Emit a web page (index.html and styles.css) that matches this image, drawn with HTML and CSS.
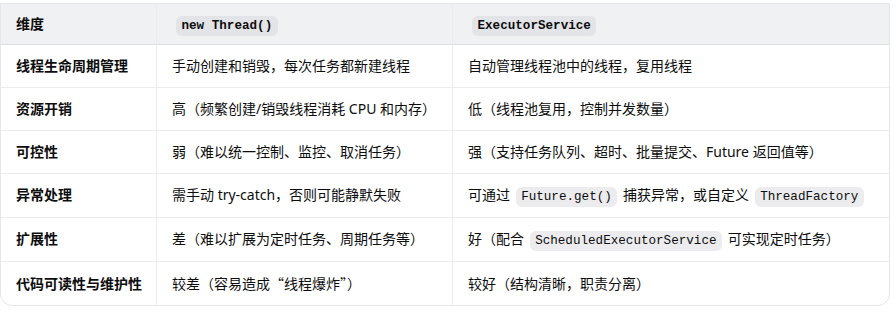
FILE: index.html
```html
<!DOCTYPE html>
<html lang="zh">
<head>
<meta charset="utf-8">
<link rel="stylesheet" href="styles.css">
</head>
<body>
<div class="wrap">
<table class="cmp">
<thead>
<tr><th class="c1">维度</th><th class="c2"><code>new Thread()</code></th><th class="c3"><code>ExecutorService</code></th></tr>
</thead>
<tbody>
<tr><td class="c1">线程生命周期管理</td><td>手动创建和销毁，每次任务都新建线程</td><td>自动管理线程池中的线程，复用线程</td></tr>
<tr><td class="c1">资源开销</td><td>高（频繁创建/销毁线程消耗 CPU 和内存）</td><td>低（线程池复用，控制并发数量）</td></tr>
<tr><td class="c1">可控性</td><td>弱（难以统一控制、监控、取消任务）</td><td>强（支持任务队列、超时、批量提交、Future 返回值等）</td></tr>
<tr class="tall"><td class="c1">异常处理</td><td>需手动 try-catch，否则可能静默失败</td><td>可通过 <code>Future.get()</code> 捕获异常，或自定义 <code>ThreadFactory</code></td></tr>
<tr class="tall"><td class="c1">扩展性</td><td>差（难以扩展为定时任务、周期任务等）</td><td>好（配合 <code>ScheduledExecutorService</code> 可实现定时任务）</td></tr>
<tr><td class="c1">代码可读性与维护性</td><td>较差（容易造成<span class="cjk">“</span>线程爆炸<span class="cjk">”</span>）</td><td>较好（结构清晰，职责分离）</td></tr>
</tbody>
</table>
</div>
</body>
</html>
```
FILE: styles.css
```css
html, body {
  margin: 0;
  padding: 0;
  background: #ffffff;
}
body {
  font-family: "Noto Sans", "Noto Sans CJK SC", sans-serif;
  font-size: 14px;
  color: #0d0d0d;
}
.wrap {
  margin-top: 3px;
  width: 888px;
  border: 1px solid #e6e6e8;
  border-radius: 0 0 12px 12px;
  overflow: hidden;
}
.cmp {
  width: 100%;
  border-collapse: collapse;
  table-layout: fixed;
}
.cmp th, .cmp td {
  text-align: left;
  padding: 10px 15px;
  line-height: 22px;
  border-left: 1px solid #ececee;
  border-top: 1px solid #ececee;
  white-space: nowrap;
}
.cmp th:first-child, .cmp td:first-child {
  border-left: none;
}
.cmp thead th {
  background: #f0f1f3;
  font-weight: 700;
  padding-top: 9px;
  padding-bottom: 9px;
  border-top: none;
}
.cmp tbody tr:first-child td {
  border-top: 1px solid #dedfe2;
}
.cmp tr.tall td {
  padding-bottom: 11px;
}
.cmp .c1 {
  width: 125px;
  font-weight: 700;
}
.cmp th.c2 {
  width: 265px;
}
.cjk {
  font-family: "Noto Sans CJK SC", sans-serif;
}
code {
  font-family: "Liberation Mono", "DejaVu Sans Mono", monospace;
  font-size: 12.6px;
  line-height: 1;
  background: #ececee;
  border-radius: 6px;
  padding: 3px 5.5px;
  margin: 0 2px;
}
.cmp thead code {
  background: #e3e4e8;
  margin: 0 0 0 4px;
}
```
